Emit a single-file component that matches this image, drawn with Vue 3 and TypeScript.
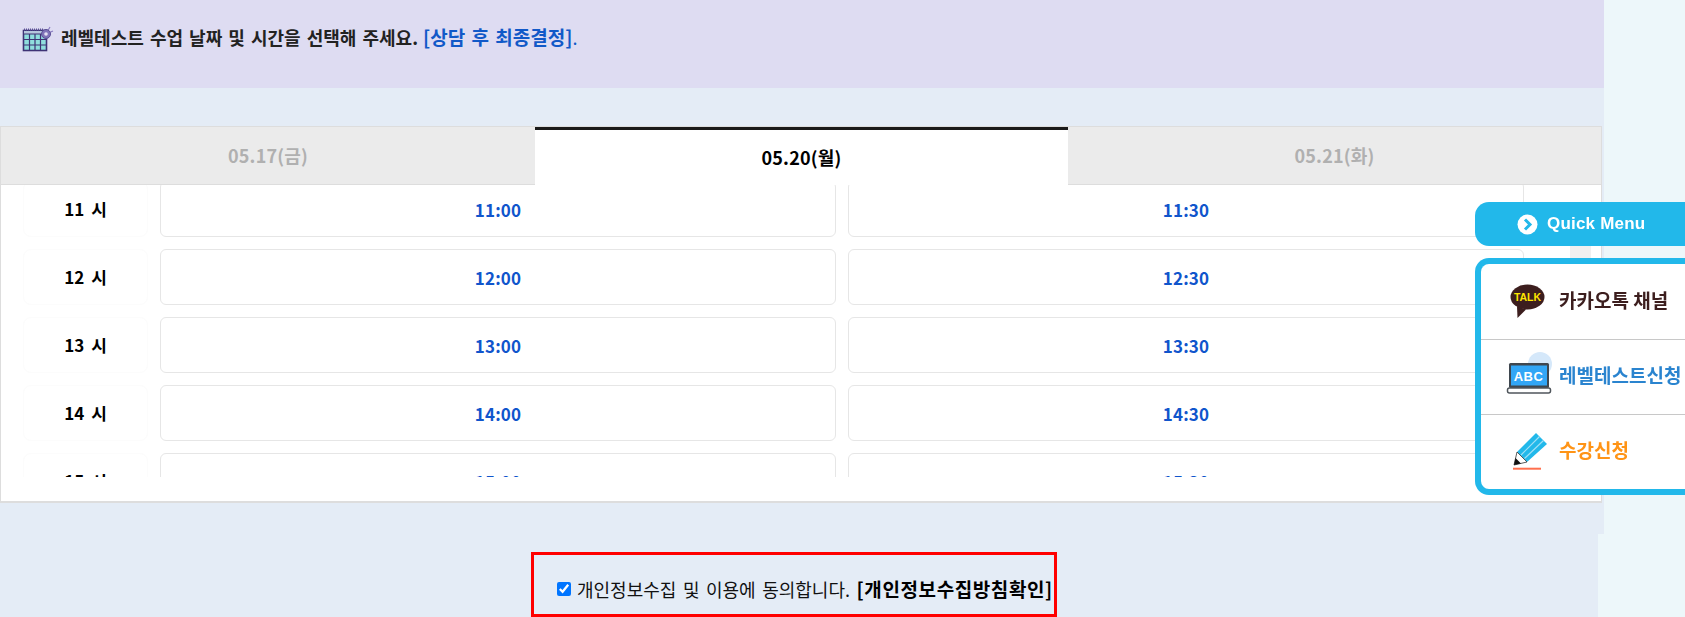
<script setup lang="ts">
interface DayTab {
  label: string
  active?: boolean
}

const tabs: DayTab[] = [
  { label: '05.17(금)' },
  { label: '05.20(월)', active: true },
  { label: '05.21(화)' },
]

const hours = [11, 12, 13, 14, 15]
const pad = (n: number) => String(n).padStart(2, '0')
</script>

<template>
  <div class="page">
    <main class="main">
      <header class="notice">
        <svg class="cal-icon" width="32" height="26" viewBox="0 0 32 26">
          <rect x="1.5" y="4.5" width="23" height="20" fill="#8fdedd" stroke="#3e3375" stroke-width="1.6" />
          <rect x="1.5" y="4.5" width="23" height="3.5" fill="#b5c6dc" stroke="#3e3375" stroke-width="1" />
          <path d="M2 3.5h20" stroke="#5b4f96" stroke-width="2" stroke-dasharray="1 1" />
          <path d="M7.5 8v16M13 8v16M18.500 8v16M2 13.500h22M2 19h22" stroke="#3e3375" stroke-width="1.2" />
          <path d="M24 8 31 5M24 8 28 1" stroke="#8a7cc0" stroke-width="1.2" />
          <circle cx="24" cy="8" r="4.500" fill="#8073b8" stroke="#5b4f96" />
          <circle cx="24" cy="8" r="1.800" fill="#e4e0f2" />
        </svg>
        <p class="notice-text">
          레벨테스트 수업 날짜 및 시간을 선택해 주세요. <span class="notice-hl">[상담 후 최종결정]</span><span class="notice-dot">.</span>
        </p>
      </header>

      <section class="card">
        <nav class="tabs">
          <button v-for="tab in tabs" :key="tab.label" class="tab" :class="{ active: tab.active }">
            {{ tab.label }}
          </button>
        </nav>
        <div class="body">
          <div class="scroller">
            <div v-for="h in hours" :key="h" class="row">
              <div class="hour">{{ h }} 시</div>
              <button class="slot">{{ pad(h) }}:00</button>
              <button class="slot">{{ pad(h) }}:30</button>
            </div>
          </div>
          <div class="track"></div>
        </div>
      </section>
    </main>

    <footer class="agree-wrap">
      <label class="agree">
        <input type="checkbox" checked />
        <span>개인정보수집 및 이용에 동의합니다. <b>[개인정보수집방침확인]</b></span>
      </label>
    </footer>

    <aside class="quick">
      <div class="quick-head">
        <svg width="21" height="21" viewBox="0 0 21 21">
          <circle cx="10.500" cy="10.500" r="10" fill="#fff" />
          <path d="M8 5.500 13 10.500 8 15.500" fill="none" stroke="#22b8ea" stroke-width="3" />
        </svg>
        <span>Quick Menu</span>
      </div>
      <ul class="quick-box">
        <li class="quick-item kakao">
          <svg width="50" height="50" viewBox="0 0 50 50">
            <path d="M12 29 12.500 41 21 32.500Z" fill="#3c1e1e" />
            <ellipse cx="22.500" cy="20" rx="17" ry="12.500" fill="#3c1e1e" />
            <text x="22.500" y="24" class="talk">TALK</text>
          </svg>
          <span>카카오톡 채널</span>
        </li>
        <li class="quick-item level">
          <svg width="50" height="50" viewBox="0 0 50 50">
            <circle cx="35" cy="12" r="12" fill="#d5e8fa" />
            <rect x="4" y="11" width="40" height="25" rx="1.500" fill="#3f474f" />
            <rect x="6" y="13.500" width="36" height="20" fill="#32a6f6" />
            <rect x="2.500" y="36" width="43" height="5" rx="2" fill="#fff" stroke="#50565c" stroke-width="1.500" />
            <text x="23.500" y="28.500" class="abc">ABC</text>
          </svg>
          <span>레벨테스트신청</span>
        </li>
        <li class="quick-item apply">
          <svg width="50" height="50" viewBox="0 0 50 50">
            <path d="M31 6 42 17 22 35 12 25Z" fill="#22b8ea" />
            <path d="M34.500 9.500 16 28M38.500 13.500 19.500 31.500" stroke="#9fe0f6" stroke-width="1.200" />
            <path d="M12 25 22 35 9 38Z" fill="#fff" stroke="#333" stroke-width=".8" />
            <path d="M10.500 31 9 38 16 36.500Z" fill="#111" />
            <path d="M8 41.700h28" stroke="#ff6f4d" stroke-width="2" />
          </svg>
          <span>수강신청</span>
        </li>
      </ul>
    </aside>
  </div>
</template>

<style>
html,
body {
  margin: 0;
  overflow: hidden;
}
</style>

<style scoped>
.page {
  position: relative;
  height: 617px;
  overflow: hidden;
  background: #edf7fa;
  font-family: "Noto Sans CJK KR", "Noto Sans", sans-serif;
  color: #111;
}

.main {
  width: 1604px;
  height: 534px;
  background: #e4ecf6;
  overflow: hidden;
}

.notice {
  display: flex;
  align-items: center;
  gap: 7px;
  height: 88px;
  box-sizing: border-box;
  padding: 0 0 16px 22px;
  background: #dedcf2;
}

.cal-icon {
  margin-top: 6px;
}

.notice-text {
  margin: 0;
  font-size: 18px;
  font-weight: 700;
  word-spacing: 2px;
  color: #222;
}

.notice-hl {
  margin-left: -1px;
  font-size: 19px;
  font-weight: 700;
  color: #1159c8;
}

.notice-dot {
  color: #1159c8;
  font-weight: 400;
}

.card {
  display: flex;
  flex-direction: column;
  width: 1602px;
  height: 377px;
  box-sizing: border-box;
  margin-top: 38px;
  background: #fff;
  border: 1px solid #dddddd;
  border-bottom-width: 2px;
}

.tabs {
  display: grid;
  grid-template-columns: 534px 533px 533px;
  height: 58px;
  flex-shrink: 0;
  border-bottom: 1px solid #dddddd;
  box-sizing: border-box;
}

.tab {
  padding: 0 0 2px;
  border: 0;
  background: #ebebeb;
  font: inherit;
  font-size: 18px;
  font-weight: 700;
  letter-spacing: 0.2px;
  color: #b0b0b0;
}

.tab.active {
  margin-bottom: -1px;
  background: #fff;
  border-top: 3px solid #1a1a1a;
  color: #000;
}

.body {
  position: relative;
  flex: 1;
}

.scroller {
  height: 292px;
  overflow: hidden;
}

.row {
  display: grid;
  grid-template-columns: 125px 676px 676px;
  column-gap: 12px;
  height: 56px;
  margin-bottom: 12px;
  padding-left: 22px;
}

.row:first-child {
  margin-top: -4px;
}

.hour {
  display: flex;
  align-items: center;
  justify-content: center;
  box-sizing: border-box;
  padding-bottom: 2px;
  border: 1px solid #fcfcfc;
  border-radius: 8px;
  font-size: 17px;
  font-weight: 700;
  word-spacing: 3px;
  color: #000;
}

.slot {
  padding: 0;
  background: #fff;
  border: 1px solid #e6e6e6;
  border-radius: 6px;
  font: inherit;
  font-size: 17px;
  font-weight: 700;
  letter-spacing: 0.2px;
  color: #1055cc;
}

.track {
  position: absolute;
  top: 40px;
  right: 10px;
  width: 21px;
  height: 50px;
  background: #f0f0f0;
}

.agree-wrap {
  width: 1598px;
  height: 83px;
  background: #e4ecf6;
  padding: 18px 0 0 531px;
  box-sizing: border-box;
}

.agree {
  display: flex;
  align-items: center;
  gap: 6px;
  width: 526px;
  height: 65px;
  box-sizing: border-box;
  padding: 8px 0 0 23px;
  border: 3px solid #ff0000;
  font-size: 18px;
  word-spacing: 2.5px;
  color: #111;
  white-space: nowrap;
}

.agree input {
  width: 14px;
  height: 14px;
  margin: 0;
  accent-color: #0075ff;
}

.agree b {
  font-size: 19px;
  font-weight: 700;
  letter-spacing: 0.6px;
  color: #000;
}

.quick {
  position: absolute;
  top: 202px;
  left: 1475px;
  right: 0;
  display: flex;
  flex-direction: column;
  gap: 12px;
}

.quick-head {
  display: flex;
  align-items: center;
  gap: 9px;
  height: 44px;
  padding-left: 42px;
  background: #22b8ea;
  border-radius: 14px 0 0 14px;
  font-family: "Liberation Sans", Arial, sans-serif;
  font-size: 17px;
  font-weight: 700;
  letter-spacing: 0.2px;
  color: #fff;
  filter: blur(0.3px);
}

.quick-box {
  display: flex;
  flex-direction: column;
  height: 237px;
  box-sizing: border-box;
  margin: 0;
  padding: 0;
  list-style: none;
  background: #fff;
  border: 6px solid #22b8ea;
  border-right: 0;
  border-radius: 14px 0 0 14px;
}

.quick-item {
  flex: none;
  height: 75px;
  box-sizing: border-box;
  display: flex;
  align-items: center;
  gap: 4px;
  padding-left: 24px;
  font-size: 19px;
  font-weight: 700;
  white-space: nowrap;
}

.quick-item svg {
  flex-shrink: 0;
}

.quick-item span {
  margin-top: -5px;
  filter: blur(0.4px);
}

.quick-item + .quick-item {
  border-top: 1px solid #c8c8c8;
}

.kakao {
  color: #3c1e1e;
}

.level {
  color: #2a84cf;
}

.apply {
  color: #ff9416;
}

.talk {
  font-family: "Liberation Sans", Arial, sans-serif;
  font-size: 10.500px;
  font-weight: 700;
  fill: #ffe600;
  text-anchor: middle;
}

.abc {
  font-family: "Liberation Sans", Arial, sans-serif;
  font-size: 13px;
  font-weight: 700;
  letter-spacing: 0.5px;
  fill: #fff;
  text-anchor: middle;
}
</style>
